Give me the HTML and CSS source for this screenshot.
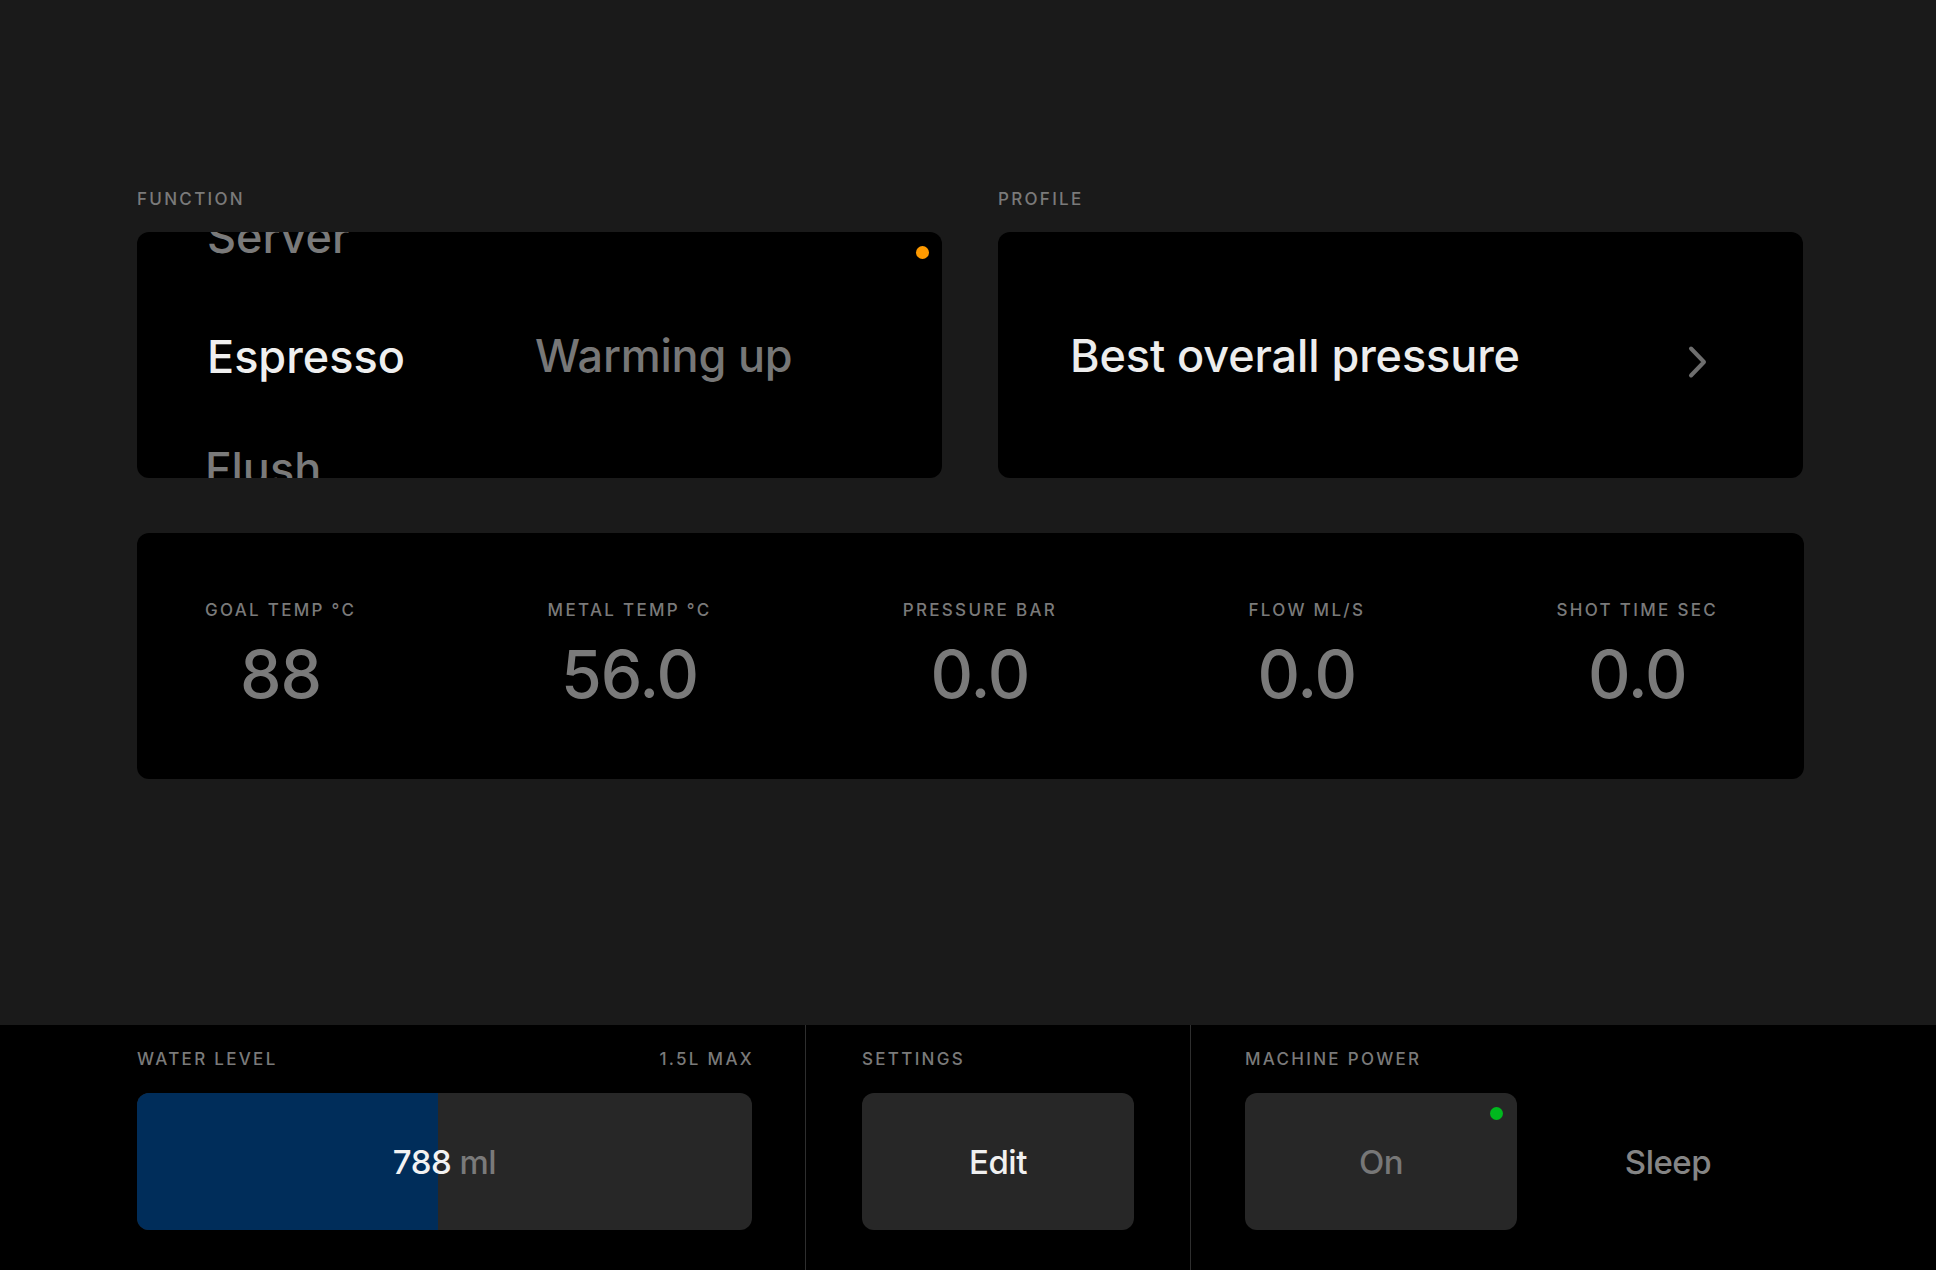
FILE: index.html
```html
<!DOCTYPE html>
<html lang="en">
<head>
<meta charset="utf-8">
<title>Espresso</title>
<link rel="stylesheet" href="styles.css">
</head>
<body>
<div class="app">
  <main class="main">
    <div class="top-row">
      <section class="panel">
        <div class="label">FUNCTION</div>
        <div class="card function-card">
          <div class="wheel">
            <div class="wheel-item prev">Server</div>
            <div class="wheel-item current">Espresso</div>
            <div class="wheel-item next">Flush</div>
          </div>
          <div class="status">Warming up</div>
          <span class="dot dot-orange"></span>
        </div>
      </section>
      <section class="panel">
        <div class="label">PROFILE</div>
        <div class="card profile-card">
          <div class="profile-name">Best overall pressure</div>
          <svg class="chevron" width="20" height="34" viewBox="0 0 20 34" aria-hidden="true">
            <polyline points="4,3.5 17,17 4,30.5" fill="none" stroke="#6e6e6e" stroke-width="4" stroke-linecap="round" stroke-linejoin="round"/>
          </svg>
        </div>
      </section>
    </div>
    <div class="card stats-card">
      <div class="stat"><div class="label">GOAL TEMP °C</div><div class="value">88</div></div>
      <div class="stat"><div class="label">METAL TEMP °C</div><div class="value">56.0</div></div>
      <div class="stat"><div class="label">PRESSURE BAR</div><div class="value">0.0</div></div>
      <div class="stat"><div class="label">FLOW ML/S</div><div class="value">0.0</div></div>
      <div class="stat"><div class="label">SHOT TIME SEC</div><div class="value">0.0</div></div>
    </div>
  </main>
  <footer class="bottom-bar">
    <section class="bar-section water">
      <div class="label-row"><span class="label">WATER LEVEL</span><span class="label label-end">1.5L MAX</span></div>
      <div class="water-bar">
        <div class="water-fill" style="width: 49%"></div>
        <div class="water-text"><span class="water-num">788</span> <span class="water-unit">ml</span></div>
      </div>
    </section>
    <section class="bar-section settings">
      <div class="label-row"><span class="label">SETTINGS</span></div>
      <div class="btn btn-light">Edit</div>
    </section>
    <section class="bar-section power">
      <div class="label-row"><span class="label">MACHINE POWER</span></div>
      <div class="btn-group">
        <div class="btn btn-active">On<span class="dot dot-green"></span></div>
        <div class="btn btn-ghost">Sleep</div>
      </div>
    </section>
  </footer>
</div>
</body>
</html>
```
FILE: styles.css
```css
* { box-sizing: border-box; }
html, body { margin: 0; padding: 0; }
body {
  background: #1a1a1a;
  font-family: Inter, "Open Sans", "Liberation Sans", sans-serif;
  font-weight: 500;
  color: #ececec;
}
.app {
  width: 1936px;
  height: 1270px;
  display: flex;
  flex-direction: column;
}
.main {
  flex: 1;
  padding: 189px 132px 0 137px;
}
.label {
  font-size: 17px;
  line-height: 20px;
  letter-spacing: 2.3px;
  color: #7a7a7a;
  white-space: nowrap;
}
.label-end { margin-right: -2px; }
.top-row {
  display: grid;
  grid-template-columns: 805px 805px;
  column-gap: 56px;
}
.panel .label { margin-bottom: 23px; }
.card {
  background: #000;
  border-radius: 12px;
  height: 246px;
  position: relative;
}
.function-card {
  display: flex;
  align-items: center;
  overflow: hidden;
  padding-left: 70px;
}
.wheel {
  width: 328px;
  display: flex;
  flex-direction: column;
  justify-content: center;
  height: 100%;
}
.wheel-item {
  font-size: 45px;
  line-height: 116px;
  letter-spacing: 0;
  color: #7a7a7a;
  white-space: nowrap;
}
.wheel-item.prev { margin-top: -4px; margin-bottom: 4px; }
.wheel-item.next { margin-top: -4px; margin-left: -2px; }
.wheel-item.current { color: #efefef; }
.status {
  font-size: 45px;
  letter-spacing: -0.2px;
  color: #777;
  white-space: nowrap;
}
.dot {
  position: absolute;
  width: 13px;
  height: 13px;
  border-radius: 50%;
}
.dot-orange { background: #ff9a00; top: 14px; right: 13px; }
.dot-green { background: #00b81e; top: 14px; right: 14px; }
.profile-card {
  display: flex;
  align-items: center;
  justify-content: space-between;
  padding: 0 96px 0 72px;
}
.profile-name {
  font-size: 45px;
  letter-spacing: -0.1px;
  color: #ededed;
  white-space: nowrap;
}
.chevron { margin-top: 13px; display: block; }
.stats-card {
  margin-top: 55px;
  display: flex;
  justify-content: space-between;
  align-items: flex-start;
  padding: 67px 86px 0 68px;
}
.stat {
  display: flex;
  flex-direction: column;
  align-items: center;
}
.value {
  margin-top: 19px;
  font-size: 66px;
  line-height: 70px;
  letter-spacing: -1px;
  color: #7a7a7a;
}
.bottom-bar {
  height: 245px;
  background: #000;
  display: flex;
}
.bar-section {
  padding-top: 24px;
  display: flex;
  flex-direction: column;
}
.bar-section.water {
  width: 806px;
  padding-left: 137px;
  padding-right: 53px;
  border-right: 1px solid #2e2e2e;
}
.bar-section.settings {
  width: 385px;
  padding-left: 56px;
  padding-right: 56px;
  border-right: 1px solid #2e2e2e;
}
.bar-section.power {
  flex: 1;
  padding-left: 54px;
}
.label-row {
  display: flex;
  justify-content: space-between;
  margin-bottom: 24px;
}
.water-bar {
  display: grid;
  height: 137px;
  border-radius: 12px;
  overflow: hidden;
  background: #272727;
}
.water-fill {
  grid-area: 1 / 1;
  background: #002d5a;
  height: 100%;
}
.water-text {
  grid-area: 1 / 1;
  align-self: center;
  justify-self: center;
  font-size: 33px;
  letter-spacing: -0.5px;
}
.water-num { color: #f2f2f2; }
.water-unit { color: #7a7a7a; }
.btn {
  width: 272px;
  height: 137px;
  border-radius: 12px;
  display: flex;
  align-items: center;
  justify-content: center;
  font-size: 33px;
  letter-spacing: -0.5px;
  position: relative;
}
.btn-light { background: #272727; color: #f0f0f0; }
.btn-group { display: flex; gap: 15px; }
.btn-active { background: #272727; color: #777; }
.btn-ghost { background: transparent; color: #858585; }
```
